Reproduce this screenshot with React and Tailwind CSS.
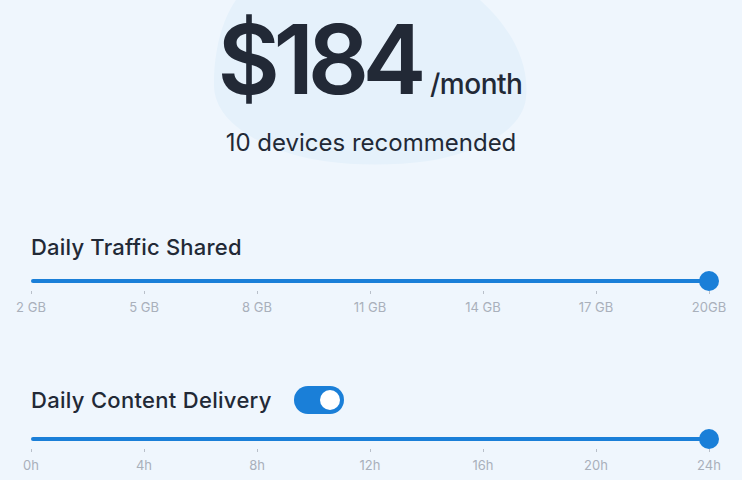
import React, { useState } from "react";

function Slider({ labels }) {
  return (
    <div className="relative">
      <div className="relative h-[20px] flex items-center">
        <div className="h-[4px] w-full rounded-full bg-[#1a7fd8]" />
        <div className="absolute right-[-10px] top-0 h-[20px] w-[20px] rounded-full bg-[#1a7fd8]" />
      </div>
      <div className="flex justify-between">
        {labels.map((l) => (
          <div key={l} className="w-0 flex flex-col items-center">
            <div className="h-[3px] w-px bg-[#b9c0ca]" />
            <span className="mt-[7px] whitespace-nowrap text-[13px] leading-none text-[#a9b0bb]">{l}</span>
          </div>
        ))}
      </div>
    </div>
  );
}

export default function App() {
  const [on, setOn] = useState(true);

  return (
    <div
      className="relative w-[742px] h-[480px] overflow-hidden bg-[#eff6fd] text-[#222936]"
      style={{ fontFamily: "Inter, 'Noto Sans', sans-serif" }}
    >
      {/* blob behind the price */}
      <svg className="absolute left-0 top-0" width="742" height="200" viewBox="0 0 742 200">
        <path
          d="M236 0 L480 0 C508 25 530 60 526 98 C522 132 478 152 428 161 C378 168 318 165 280 150 C244 137 214 115 214 85 C214 50 222 20 236 0 Z"
          fill="#e5f1fb"
        />
      </svg>

      <div className="relative flex flex-col items-center pt-[11px]">
        <div className="flex items-baseline pr-[2px]">
          <span className="text-[96px] font-semibold leading-none tracking-[-6.5px]">$184</span>
          <span className="ml-[10px] text-[28px] font-medium leading-none tracking-[-0.5px]">/month</span>
        </div>
        <p className="mt-[24px] text-[24px] leading-none">10 devices recommended</p>
      </div>

      <div className="relative px-[31px] pr-[33px] mt-[81px]">
        <h2 className="text-[22px] font-medium leading-none tracking-[0.2px]">Daily Traffic Shared</h2>
        <div className="mt-[13px]">
          <Slider labels={["2 GB", "5 GB", "8 GB", "11 GB", "14 GB", "17 GB", "20GB"]} />
        </div>

        <div className="mt-[72px] flex items-center gap-[22px]">
          <h2 className="text-[22px] font-medium leading-none tracking-[0.3px]">Daily Content Delivery</h2>
          <button
            onClick={() => setOn(!on)}
            className="flex h-[28px] w-[50px] items-center rounded-full bg-[#1a7fd8] px-[4px] justify-end"
          >
            <span className="h-[20px] w-[20px] rounded-full bg-white" />
          </button>
        </div>
        <div className="mt-[15px]">
          <Slider labels={["0h", "4h", "8h", "12h", "16h", "20h", "24h"]} />
        </div>
      </div>
    </div>
  );
}
